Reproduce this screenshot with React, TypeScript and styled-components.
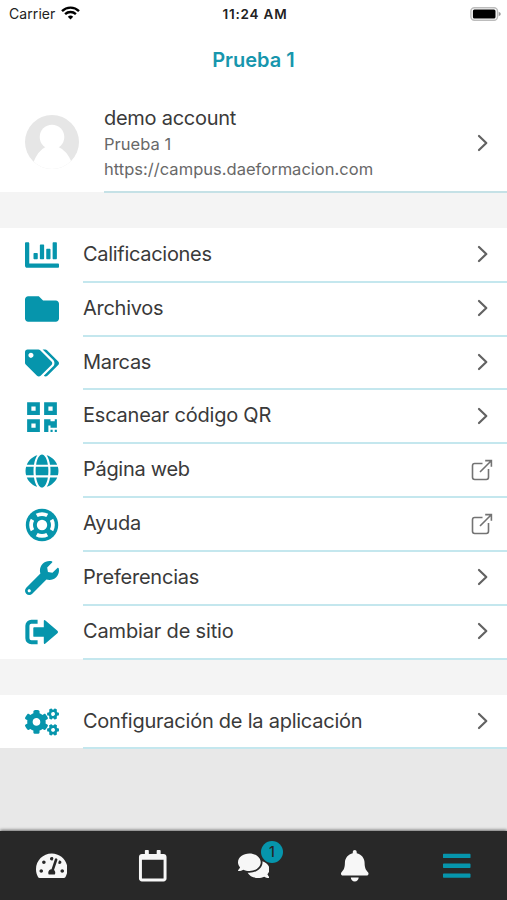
import React from 'react';
import styled, { createGlobalStyle } from 'styled-components';
import {
  FaBars, FaBell, FaChartBar, FaCogs, FaComments, FaFolder, FaGlobe,
  FaQrcode, FaRegCalendar, FaTachometerAlt, FaTags, FaWrench,
} from 'react-icons/fa';

const teal = '#0695ac';

const GlobalStyle = createGlobalStyle`
  * { box-sizing: border-box; }
  body { margin: 0; font-family: Inter, "Liberation Sans", sans-serif; color: #3a3a3a; background: #e8e8e8; }
`;

const Screen = styled.div`
  width: 507px;
  height: 900px;
  display: flex;
  flex-direction: column;
  overflow: hidden;
  background: #e8e8e8;
`;

const StatusBar = styled.div`
  height: 28px;
  flex: none;
  display: grid;
  grid-template-columns: 1fr auto 1fr;
  align-items: center;
  padding: 0 6px 0 9px;
  background: #fff;
  color: #222;
  font-size: 14px;
  line-height: 18px;
`;

const Carrier = styled.div`
  display: flex;
  align-items: center;
  gap: 6px;
  letter-spacing: 0.08px;
  svg { margin-top: -2px; }
`;

const Clock = styled.div`
  font-size: 13.5px;
  font-weight: 600;
  letter-spacing: 0.8px;
`;

const BatterySlot = styled.div`
  display: flex;
  justify-content: flex-end;
  margin-top: -1px;
`;

const Title = styled.h1`
  height: 64px;
  flex: none;
  margin: 0;
  background: #fff;
  color: #1796ad;
  font-size: 20px;
  font-weight: 600;
  line-height: 64px;
  text-align: center;
`;

const Account = styled.div`
  height: 101px;
  flex: none;
  display: flex;
  align-items: stretch;
  padding-left: 25px;
  background: linear-gradient(#fff 100px, #f4f4f4 100px);
`;

const AvatarSlot = styled.div`
  width: 79px;
  flex: none;
  padding-top: 23px;
`;

const AccountBody = styled.div`
  flex: 1;
  display: flex;
  align-items: center;
  justify-content: space-between;
  padding: 2px 18px 0 0;
  border-bottom: 2px solid #c5e1e6;
`;

const Name = styled.div`
  font-size: 20px;
  line-height: 28px;
  letter-spacing: -0.27px;
`;

const Detail = styled.div`
  color: #686868;
  font-size: 16.5px;
  line-height: 24.5px;
  letter-spacing: 0.02px;
`;

const Gap = styled.div`
  height: 36px;
  flex: none;
  background: #f4f4f4;
`;

const AccountGap = styled(Gap)`
  height: 35px;
`;

const List = styled.div`
  flex: none;
  background: #fff;
`;

const Row = styled.div`
  height: 53.83px;
  display: flex;
  align-items: stretch;
  padding-left: 25px;
`;

const RowIcon = styled.div`
  width: 58px;
  flex: none;
  display: flex;
  align-items: center;
  color: ${teal};
  svg { width: 34px; height: 34px; margin-top: 1px; }
`;

const RowBody = styled.div<{ $external: boolean }>`
  flex: 1;
  display: flex;
  align-items: center;
  justify-content: space-between;
  margin-bottom: -1px;
  padding-right: ${(p) => (p.$external ? 14 : 18)}px;
  border-bottom: 2px solid #c4e7ee;
  z-index: 1;
`;

const Label = styled.span<{ $spacing: number }>`
  margin-top: -1px;
  font-size: 20px;
  line-height: 28px;
  letter-spacing: ${(p) => p.$spacing}px;
`;

const TabBar = styled.nav`
  height: 69px;
  flex: none;
  margin-top: auto;
  display: grid;
  grid-template-columns: repeat(5, 1fr);
  background: #282828;
  box-shadow: 0 -1px 3px rgba(0, 0, 0, 0.55);
`;

const Tab = styled.div<{ $active?: boolean; $left?: number }>`
  position: relative;
  display: flex;
  align-items: center;
  justify-content: center;
  padding: 1px 0 0 ${(p) => p.$left ?? 0}px;
  color: ${(p) => (p.$active ? teal : '#f7f7f7')};
  svg { width: 31.5px; height: 31.5px; }
`;

const Badge = styled.span`
  position: absolute;
  top: 10px;
  left: 58px;
  width: 22px;
  height: 22px;
  border-radius: 50%;
  background: ${teal};
  color: #252525;
  font-size: 14px;
  font-weight: 500;
  line-height: 22px;
  text-align: center;
`;

const Wifi = () => (
  <svg width="19" height="14" viewBox="0 0 19 14" fill="none" stroke="#000" strokeWidth="2.4">
    <path d="M1 5.1a12.2 12.2 0 0 1 17 0" />
    <path d="M4.1 8.1a7.9 7.9 0 0 1 10.8 0" />
    <path d="M6.8 10.7a4 4 0 0 1 5.4 0L9.5 13.4Z" fill="#000" stroke="none" />
  </svg>
);

const Battery = () => (
  <svg width="31" height="14" viewBox="0 0 31 14">
    <rect x="0.9" y="0.7" width="26.6" height="12.6" rx="3.5" fill="#fff" stroke="#bcbcbc" strokeWidth="1.4" />
    <rect x="2.9" y="2.4" width="22.6" height="9.2" rx="1.5" fill="#000" />
    <path d="M28.7 4.8q2.1.8 2.1 2.2t-2.1 2.2Z" fill="#999" />
  </svg>
);

const Avatar = () => (
  <svg width="54" height="54" viewBox="0 0 54 54">
    <defs>
      <clipPath id="avatarClip"><circle cx="27" cy="27" r="27" /></clipPath>
    </defs>
    <g clipPath="url(#avatarClip)">
      <rect width="54" height="54" fill="#e6e6e6" />
      <circle cx="27" cy="22" r="12.3" fill="#fff" />
      <path d="M8 48Q13 35.5 20.5 32h13Q42 35.5 47 48v6H8Z" fill="#fff" />
    </g>
  </svg>
);

const Chevron = () => (
  <svg width="12" height="18" viewBox="0 0 12 18" fill="none" stroke="#626262" strokeWidth="2.2">
    <path d="m2 2 7.3 7L2 16" strokeLinecap="round" strokeLinejoin="round" />
  </svg>
);

const External = () => (
  <svg width="22" height="22" viewBox="0 0 22 22" fill="none" stroke="#737373" strokeWidth="1.6">
    <path d="M11.5 4.5H3.7A2.2 2.2 0 0 0 1.5 6.7v11.6a2.2 2.2 0 0 0 2.2 2.2h11.6a2.2 2.2 0 0 0 2.2-2.2V10M14.2 1.6h6.2v6.1M20 2 9 13" />
  </svg>
);

const LifeRing = () => (
  <svg viewBox="0 0 34 34" fill="none">
    <circle cx="17" cy="17" r="16.2" fill="currentColor" />
    <circle cx="17" cy="17" r="5.2" fill="#fff" />
    <circle
      cx="17" cy="17" r="10.9" stroke="#fff" strokeWidth="3.8"
      pathLength="360" strokeDasharray="58 32" strokeDashoffset="29"
    />
  </svg>
);

const LeaveSite = () => (
  <svg viewBox="0 0 34 34" fill="none">
    <path d="M12.6 6.8H6.4a4 4 0 0 0-4 4v12.4a4 4 0 0 0 4 4h6.2" stroke="currentColor" strokeWidth="4.1" />
    <path
      d="M9.2 12.2h9.6V6.2q0-1.9 1.6-.6l12 10.1q1.4 1.3 0 2.6l-12 10.1q-1.6 1.3-1.6-.6v-6H9.2q-.9 0-.9-.9v-7.8q0-.9.9-.9Z"
      fill="currentColor"
    />
  </svg>
);

interface Entry {
  label: string;
  icon: React.ComponentType;
  spacing?: number;
  external?: boolean;
}

const entries: Entry[] = [
  { label: 'Calificaciones', icon: FaChartBar },
  { label: 'Archivos', icon: FaFolder, spacing: -0.27 },
  { label: 'Marcas', icon: FaTags },
  { label: 'Escanear código QR', icon: FaQrcode, spacing: -0.22 },
  { label: 'Página web', icon: FaGlobe, external: true },
  { label: 'Ayuda', icon: LifeRing, spacing: -0.2, external: true },
  { label: 'Preferencias', icon: FaWrench, spacing: -0.23 },
  { label: 'Cambiar de sitio', icon: LeaveSite, spacing: -0.16 },
];

const MenuRow = ({ label, icon: Icon, spacing = -0.3, external = false }: Entry) => (
  <Row>
    <RowIcon><Icon /></RowIcon>
    <RowBody $external={external}>
      <Label $spacing={spacing}>{label}</Label>
      {external ? <External /> : <Chevron />}
    </RowBody>
  </Row>
);

export default function App() {
  return (
    <>
      <GlobalStyle />
      <Screen>
        <StatusBar>
          <Carrier>Carrier <Wifi /></Carrier>
          <Clock>11:24 AM</Clock>
          <BatterySlot><Battery /></BatterySlot>
        </StatusBar>
        <Title>Prueba 1</Title>
        <Account>
          <AvatarSlot><Avatar /></AvatarSlot>
          <AccountBody>
            <div>
              <Name>demo account</Name>
              <Detail>Prueba 1</Detail>
              <Detail>https://campus.daeformacion.com</Detail>
            </div>
            <Chevron />
          </AccountBody>
        </Account>
        <AccountGap />
        <List>{entries.map((e) => <MenuRow key={e.label} {...e} />)}</List>
        <Gap />
        <List><MenuRow label="Configuración de la aplicación" icon={FaCogs} spacing={-0.24} /></List>
        <TabBar>
          <Tab $left={2}><FaTachometerAlt /></Tab>
          <Tab $left={2}><FaRegCalendar /></Tab>
          <Tab><FaComments /><Badge>1</Badge></Tab>
          <Tab><FaBell /></Tab>
          <Tab $active><FaBars /></Tab>
        </TabBar>
      </Screen>
    </>
  );
}
